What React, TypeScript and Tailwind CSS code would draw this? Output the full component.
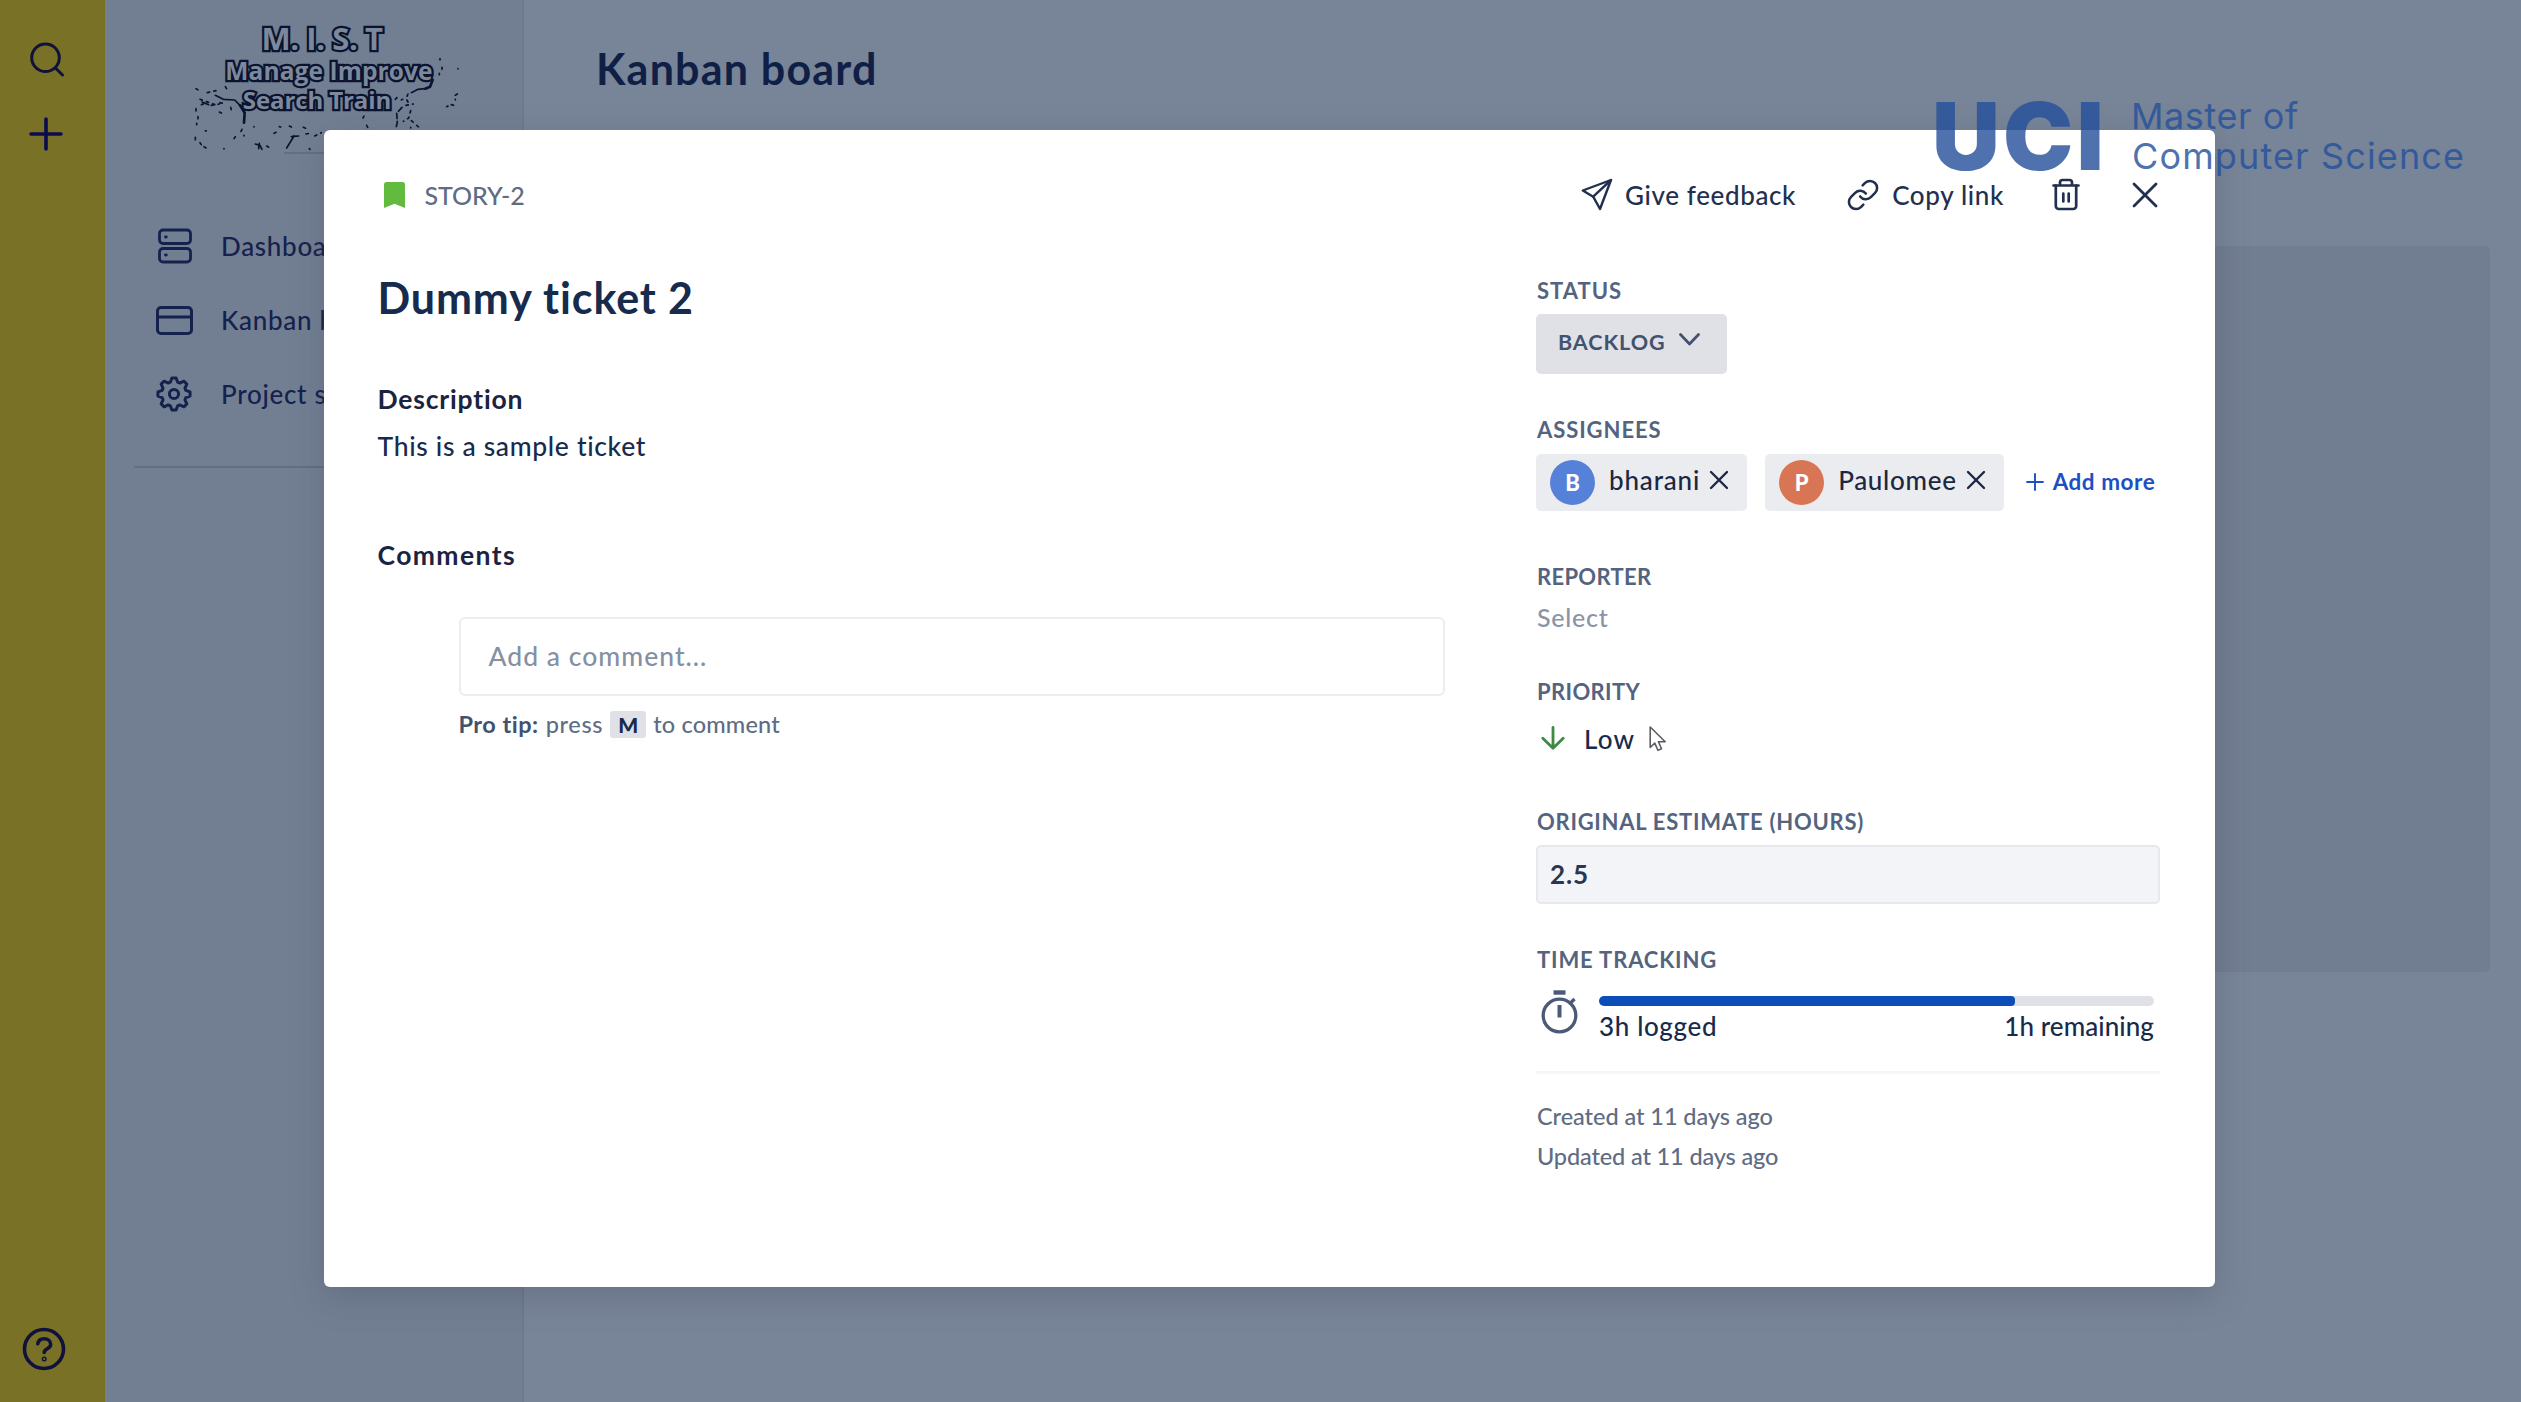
import React from "react";

type IconProps = { className?: string };

const stroke = {
  fill: "none",
  stroke: "currentColor",
  strokeLinecap: "round" as const,
  strokeLinejoin: "round" as const,
};

function SearchIcon({ className }: IconProps) {
  return (
    <svg viewBox="0 0 34 35" className={className} {...stroke} strokeWidth={3}>
      <circle cx="15.5" cy="15.8" r="13.8" />
      <path d="M25.5 26l7 7" />
    </svg>
  );
}

function PlusIcon({ className }: IconProps) {
  return (
    <svg viewBox="0 0 34 34" className={className} {...stroke} strokeWidth={3.6}>
      <path d="M17 2v30M2 17h30" />
    </svg>
  );
}

function HelpIcon({ className }: IconProps) {
  return (
    <svg viewBox="0 0 44 44" className={className} {...stroke} strokeWidth={3.6}>
      <circle cx="22" cy="22" r="19.5" />
      <path d="M15.8 16.8c.6-3.4 3.2-5 6.4-5 3.7 0 6.5 2.2 6.5 5.6 0 4.4-6.5 4.3-6.5 8" />
      <circle cx="22.2" cy="32" r=".7" />
    </svg>
  );
}

function ServerIcon({ className }: IconProps) {
  return (
    <svg viewBox="0 0 34 36" className={className} {...stroke} strokeWidth={2.8}>
      <rect x="1.5" y="2" width="31" height="13.5" rx="3.5" />
      <rect x="1.5" y="20.5" width="31" height="13.5" rx="3.5" />
      <path d="M7.5 9h.8M7.5 27h.8" />
    </svg>
  );
}

function CardIcon({ className }: IconProps) {
  return (
    <svg viewBox="0 0 37 29" className={className} {...stroke} strokeWidth={3}>
      <rect x="1.5" y="1.5" width="34" height="26" rx="3.5" />
      <path d="M1.5 11h34" />
    </svg>
  );
}

const gearPoints = Array.from({ length: 8 }, (_, i) =>
  [
    [-0.3, 12.4],
    [-0.13, 16.2],
    [0.13, 16.2],
    [0.3, 12.4],
  ].map(([offset, radius]) => {
    const angle = (i * Math.PI) / 4 + offset;
    return `${(18 + radius * Math.sin(angle)).toFixed(2)},${(18 - radius * Math.cos(angle)).toFixed(2)}`;
  })
)
  .flat()
  .join(" ");

function GearIcon({ className }: IconProps) {
  return (
    <svg viewBox="0 0 36 36" className={className} {...stroke} strokeWidth={3}>
      <polygon points={gearPoints} />
      <circle cx="18" cy="18" r="4.6" />
    </svg>
  );
}

function BookmarkIcon({ className }: IconProps) {
  return (
    <svg viewBox="0 0 21 26" className={className} fill="currentColor">
      <path d="M2.5 0h16A2.5 2.5 0 0 1 21 2.5V26l-10.5-4.2L0 26V2.5A2.5 2.5 0 0 1 2.5 0z" />
    </svg>
  );
}

function SendIcon({ className }: IconProps) {
  return (
    <svg viewBox="0 0 32 33" className={className} {...stroke} strokeWidth={2.4}>
      <path d="M30 2L1.8 12.5l10.4 6.2L19 31z" />
      <path d="M30 2L12.2 18.7" />
    </svg>
  );
}

function LinkIcon({ className }: IconProps) {
  return (
    <svg viewBox="0 0 24 24" className={className} {...stroke} strokeWidth={1.8}>
      <path d="M10 13a5 5 0 0 0 7.54.54l3-3a5 5 0 0 0-7.07-7.07l-1.72 1.71" />
      <path d="M14 11a5 5 0 0 0-7.54-.54l-3 3a5 5 0 0 0 7.07 7.07l1.71-1.71" />
    </svg>
  );
}

function TrashIcon({ className }: IconProps) {
  return (
    <svg viewBox="0 0 28 33" className={className} {...stroke} strokeWidth={2.7}>
      <path d="M1.5 7.5h25M8 7V4.5A2.5 2.5 0 0 1 10.5 2h7A2.5 2.5 0 0 1 20 4.5V7" />
      <path d="M3.8 7.5V28a3 3 0 0 0 3 3h14.4a3 3 0 0 0 3-3V7.5" />
      <path d="M11.3 15.5v8M16.7 15.5v8" />
    </svg>
  );
}

function CloseIcon({ className }: IconProps) {
  return (
    <svg viewBox="0 0 26 26" className={className} {...stroke} strokeWidth={2.8}>
      <path d="M2 2l22 22M24 2L2 24" />
    </svg>
  );
}

function SmallCloseIcon({ className }: IconProps) {
  return (
    <svg viewBox="0 0 20 20" className={className} {...stroke} strokeWidth={2.4}>
      <path d="M2 2l16 16M18 2L2 18" />
    </svg>
  );
}

function ChevronIcon({ className }: IconProps) {
  return (
    <svg viewBox="0 0 21 13" className={className} {...stroke} strokeWidth={2.7}>
      <path d="M1.5 1.5l9 9.5 9-9.5" />
    </svg>
  );
}

function ArrowDownIcon({ className }: IconProps) {
  return (
    <svg viewBox="0 0 24 24" className={className} {...stroke} strokeWidth={2.8}>
      <path d="M12 1.5v20.5M1.8 12.2L12 22.300l10.2-10.1" />
    </svg>
  );
}

function StopwatchIcon({ className }: IconProps) {
  return (
    <svg viewBox="0 0 37 44" className={className} fill="none" stroke="currentColor" strokeWidth={3.3}>
      <circle cx="18.5" cy="25.5" r="16.3" />
      <path d="M12.5 2.5h12" strokeWidth={4.4} />
      <path d="M18.5 15v12.500" strokeWidth={4} />
      <path d="M29.5 13l4-4" />
    </svg>
  );
}

function PointerIcon({ className }: IconProps) {
  return (
    <svg viewBox="0 0 18 27" className={className} fill="#fff" stroke="#5b5d63" strokeWidth={1.6} strokeLinejoin="round">
      <path d="M1.2 2v20.5l4.6-4.4 3.1 7.2 3.6-1.5-3.1-7h6.8z" />
    </svg>
  );
}

/* Speckled line art behind the project name */
function LogoArt() {
  return (
    <svg viewBox="0 0 960 480" className="absolute left-0 top-0 h-[160px] w-[320px]" {...stroke} strokeWidth={5}>
      <g strokeDasharray="7 13">
        <path d="M78 236l10 6M112 248l26-6M166 230l6 10M90 268l50 18M94 284l16-6M150 278l10 2M124 286l24-4M148 306l12 6M182 292l4 16" />
        <path d="M78 296v10M84 320v6M80 340v4M76 382v10M90 398l4 6M102 410l6 4M162 416v1M106 362l3 1M216 358l-8 16M196 380l-8 12M222 376v2M252 350v1" />
        <path d="M290 408l14 8M312 370l8-4M328 350l4 1M358 348l16 8M400 352l10 4M408 372l10-2M434 378l20-10M418 416l2 2" />
        <path d="M582 318l-6 12M590 346l4 8M676 268l6-6M694 270l4-2M714 252l-6 14 6 10M708 286l22-4M722 302l-6 22-16 10M724 332l14 12M740 346l10 8M722 352v2" />
        <path d="M810 146v4M816 172v6M808 190v4M864 176v1M862 252l-10 6M856 268v2M830 290l4-2M844 284l14 4" />
      </g>
      <path d="M136 256l24 12 34 2 16 16M96 276l20 8M256 402l14 4 6 12M268 400l-2 16M350 414l22-36M364 380l22-2" />
      <path d="M696 292l-16 18 2 26-4 18" strokeDasharray="16 8" />
      <path d="M210 286l14 22-2 30M788 210l-8 20-14 6" strokeWidth={8} />
      <path d="M766 236l-22 2-20 10" />
      <path d="M344 429h120" strokeWidth={3} stroke="#566177" />
    </svg>
  );
}

function Label({ children, className }: { children: React.ReactNode; className?: string }) {
  return (
    <div className={`whitespace-nowrap text-[22px] font-bold leading-7 text-[#54647f] ${className ?? ""}`}>{children}</div>
  );
}

function NavItem({ icon, text }: { icon: React.ReactNode; text: string }) {
  return (
    <div className="flex h-[74px] items-center whitespace-nowrap">
      <div className="flex w-[65px] items-center">{icon}</div>
      <span className="text-[26px] font-medium leading-8 tracking-[0.7px]">{text}</span>
    </div>
  );
}

function Sidebar() {
  return (
    <aside className="w-[419px] shrink-0 border-r-2 border-[#6d798d] bg-[#727f93] text-[#15224d]">
      <div className="relative ml-[65px] mt-2.5 h-[160px] w-[320px] text-[#0b132f]">
        <LogoArt />
        <div className="relative flex w-[318px] flex-col items-center font-['Open_Sans'] font-bold text-[#7c899c] [-webkit-text-stroke:4.5px_#0b132f] [paint-order:stroke_fill]">
          <span className="mt-2.5 pr-3.5 text-[31px] leading-[36px] tracking-[-0.4px]">M. I. S. T</span>
          <span className="text-[24.5px] leading-[30px] tracking-[0.1px]">Manage Improve</span>
          <span className="-mt-px pr-6 text-[24px] leading-[30px] tracking-[-0.1px]">Search Train</span>
        </div>
      </div>
      <nav className="ml-[51px] mt-[39px]">
        <NavItem icon={<ServerIcon className="ml-0.5 h-9 w-[34px]" />} text="Dashboard" />
        <NavItem icon={<CardIcon className="h-[29px] w-[37px]" />} text="Kanban board" />
        <NavItem icon={<GearIcon className="size-9" />} text="Project settings" />
      </nav>
      <div className="ml-[29px] mr-7 mt-[35px] h-0.5 bg-[#636f85]" />
    </aside>
  );
}

function Assignee({ initial, name, tone, nameClass }: { initial: string; name: string; tone: string; nameClass: string }) {
  return (
    <div className="flex h-[57px] items-center rounded-[5px] bg-[#ebecf0] pl-3.5 pr-[18px]">
      <div className={`flex size-[45px] items-center justify-center rounded-full text-[22px] font-black text-white ${tone}`}>
        {initial}
      </div>
      <span className={`mb-[5px] ml-3.5 text-[26px] font-medium leading-8 text-[#1c2742] ${nameClass}`}>{name}</span>
      <SmallCloseIcon className="mb-1 ml-[9px] size-[20px] text-[#1c2742]" />
    </div>
  );
}

function IssueHeader() {
  return (
    <header className="flex h-[50px] items-center">
      <BookmarkIcon className="ml-[6px] h-[26px] w-[21px] text-[#62ba3f]" />
      <span className="ml-[20px] text-[25px] font-medium leading-8 tracking-[-0.1px] text-[#5e6c84]">STORY-2</span>
      <div className="ml-auto mr-0.5 flex items-center text-[26px] font-medium leading-8 text-[#22304f]">
        <SendIcon className="h-[33px] w-[32px]" />
        <span className="ml-3 tracking-[0.62px]">Give feedback</span>
        <LinkIcon className="ml-[50px] size-[34px]" />
        <span className="ml-3 tracking-[0.65px]">Copy link</span>
        <TrashIcon className="ml-[48px] h-[33px] w-[28px]" />
        <CloseIcon className="ml-[52px] size-[26px]" />
      </div>
    </header>
  );
}

function IssueBody() {
  return (
    <section className="w-[1068px] text-[#172b4d]">
      <h2 className="mt-[48px] text-[43px] font-bold leading-[60px] tracking-[0.9px]">Dummy ticket 2</h2>
      <h3 className="mt-[55px] text-[26.5px] font-bold leading-8 tracking-[0.82px] text-[#1a2440]">Description</h3>
      <p className="mt-[15px] text-[26.5px] font-medium leading-8 tracking-[0.66px]">This is a sample ticket</p>
      <h3 className="mt-[77px] text-[26.5px] font-bold leading-8 tracking-[1.4px] text-[#1a2440]">Comments</h3>
      <div className="ml-[81px] mr-px mt-[46px] flex h-[79px] items-center rounded-[6px] border-2 border-[#ebeeef] pl-7 pt-px text-[26.5px] font-medium tracking-[1.02px] text-[#8590a2]">
        Add a comment...
      </div>
      <div className="ml-[81px] mt-[13px] flex items-center whitespace-nowrap text-[23.5px] font-medium leading-[30px] text-[#5e6c84]">
        <strong className="font-bold tracking-[0.51px] text-[#42526e]">Pro tip:</strong>
        <span className="ml-[7px] tracking-[0.64px]">press</span>
        <kbd className="ml-[7px] mt-0.5 flex h-[27px] w-[36px] items-center justify-center rounded-[3px] bg-[#dfe1e6] font-['Lato'] text-[21px] font-black text-[#172b4d]">
          M
        </kbd>
        <span className="ml-[7px] tracking-[0.18px]">to comment</span>
      </div>
    </section>
  );
}

function IssueDetails() {
  return (
    <section className="w-[624px] text-[#172b4d]">
      <Label className="ml-px mt-[57px] tracking-[1px]">STATUS</Label>
      <button className="mt-[9px] flex h-[60px] w-[191px] items-center rounded-[5px] bg-[#dfe1e6] pb-0.5 pl-[22px] text-[21.5px] font-bold tracking-[0.94px] text-[#42526e]">
        BACKLOG
        <ChevronIcon className="mb-1.5 ml-[13px] h-[13px] w-[21px]" />
      </button>

      <Label className="ml-px mt-[42px] tracking-[0.92px]">ASSIGNEES</Label>
      <div className="mt-[10px] flex items-center whitespace-nowrap">
        <Assignee initial="B" name="bharani" tone="bg-[#5581d8]" nameClass="tracking-[0.83px]" />
        <div className="w-[18px]" />
        <Assignee initial="P" name="Paulomee" tone="bg-[#d87554]" nameClass="tracking-[0.7px]" />
        <PlusIcon className="ml-[22px] size-[18px] text-[#1d4fc4]" />
        <span className="ml-[9px] text-[22.5px] font-bold tracking-[0.54px] text-[#1d4fc4]">Add more</span>
      </div>

      <Label className="ml-px mt-[52px] tracking-[0.32px]">REPORTER</Label>
      <div className="ml-px mt-[11px] text-[25px] font-medium leading-[30px] tracking-[0.75px] text-[#8a94a6]">Select</div>

      <Label className="ml-px mt-[46px] tracking-[0.37px]">PRIORITY</Label>
      <div className="mt-[17px] flex h-8 items-center">
        <ArrowDownIcon className="mb-0.5 ml-[5px] size-6 text-[#3c8a43]" />
        <span className="ml-[19px] text-[26px] font-medium leading-8 tracking-[1.2px]">Low</span>
        <PointerIcon className="ml-[14px] h-[27px] w-[18px]" />
      </div>

      <Label className="ml-px mt-[53px] tracking-[0.73px]">ORIGINAL ESTIMATE (HOURS)</Label>
      <div className="mt-[9px] flex h-[59px] items-center rounded-[5px] border-2 border-[#e6e8ec] bg-[#f3f4f7] pl-3 text-[26px] font-bold tracking-[0.9px] text-[#2a3752]">
        2.5
      </div>

      <Label className="ml-px mt-[42px] tracking-[0.85px]">TIME TRACKING</Label>
      <div className="mt-[16px] flex">
        <StopwatchIcon className="ml-[5px] h-[44px] w-[37px] text-[#4a5a78]" />
        <div className="ml-[21px] mt-[6px] w-[555px]">
          <div className="h-[10px] overflow-hidden rounded-[5px] bg-[#dfe1e6]">
            <div className="h-full w-3/4 rounded-[4px] bg-[#0c4db8]" />
          </div>
          <div className="mt-[5px] flex justify-between text-[26px] font-medium leading-[30px]">
            <span className="tracking-[0.65px]">3h logged</span>
            <span className="tracking-[0.07px]">1h remaining</span>
          </div>
        </div>
      </div>

      <div className="mt-[30px] h-[3px] bg-[#f5f6f7]" />
      <div className="ml-px mt-[22px] text-[23.5px] font-medium leading-10 text-[#5e6c84]">
        <div className="tracking-[-0.05px]">Created at 11 days ago</div>
        <div className="tracking-[-0.13px]">Updated at 11 days ago</div>
      </div>
    </section>
  );
}

export default function App() {
  return (
    <div className="relative flex h-[1402px] w-[2521px] overflow-hidden bg-[#788598] font-['Lato',sans-serif]">
      <div className="flex w-[105px] shrink-0 flex-col bg-[#797226] text-[#10123c]">
        <SearchIcon className="ml-[30px] mt-[42px] h-[35px] w-[34px]" />
        <PlusIcon className="ml-[29px] mt-[40px] size-[34px] text-[#0b0c50]" />
        <HelpIcon className="mb-[31px] ml-[22px] mt-auto size-[44px]" />
      </div>
      <Sidebar />
      <main className="flex-1 pl-[72px] pr-[31px]">
        <h1 className="mt-[39px] text-[43px] font-bold leading-[60px] tracking-[1.2px] text-[#0f1f45]">Kanban board</h1>
        <div className="mt-[147px] h-[726px] rounded-[5px] bg-[#717d91]" />
      </main>

      <div className="absolute left-[323.5px] top-[129.5px] w-[1891.5px] rounded-[6px] bg-white pl-[54px] pr-[55px] pt-[40px] shadow-[0_10px_34px_rgba(70,70,90,0.3)]">
        <div className="h-[1117.5px]">
          <IssueHeader />
          <div className="flex justify-between">
            <IssueBody />
            <IssueDetails />
          </div>
        </div>
      </div>

      <div className="pointer-events-none absolute left-[1932px] top-[96px] flex whitespace-nowrap font-['Inter',sans-serif] text-[#24509c] opacity-80">
        <span className="w-[199px] text-[94px] font-black leading-[80px] tracking-[3.2px]">UCI</span>
        <div className="text-[36px] leading-10">
          <div className="tracking-[0.57px]">Master of</div>
          <div className="ml-px tracking-[1.13px]">Computer Science</div>
        </div>
      </div>
    </div>
  );
}
